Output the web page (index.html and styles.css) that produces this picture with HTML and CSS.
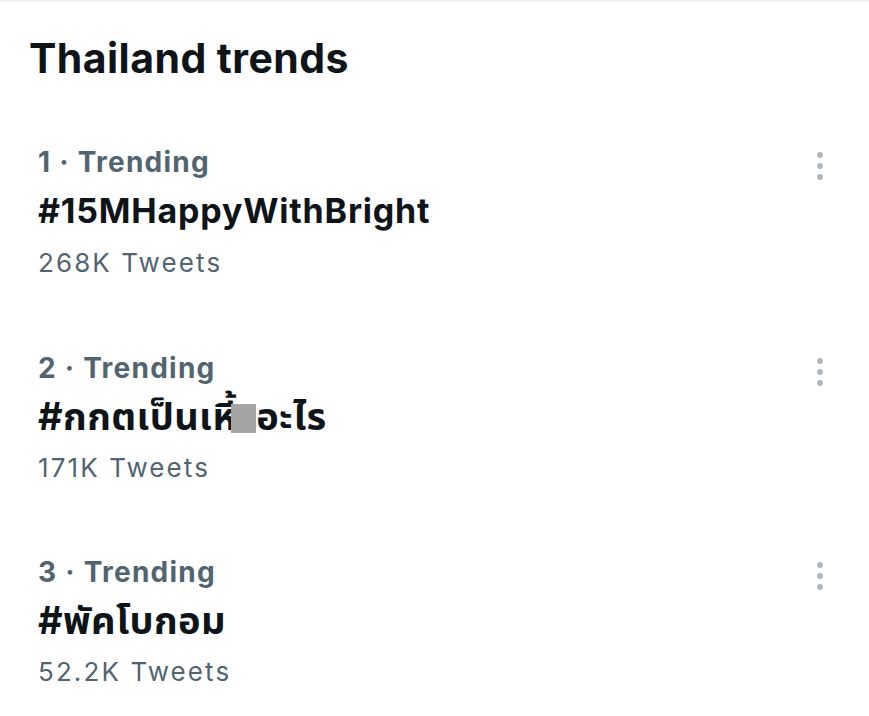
FILE: index.html
```html
<!DOCTYPE html>
<html lang="th">
<head>
<meta charset="utf-8">
<title>Thailand trends</title>
<link rel="stylesheet" href="styles.css">
</head>
<body>
<section class="panel">
  <h2 class="header">Thailand trends</h2>

  <div class="trend">
    <div class="trend-body">
      <div class="meta">1 · Trending</div>
      <div class="name">#15MHappyWithBright</div>
      <div class="count">268K Tweets</div>
    </div>
    <button class="more" aria-label="More">
      <svg width="12" height="34" viewBox="0 0 12 34"><circle cx="6" cy="6" r="2.9"/><circle cx="6" cy="17" r="2.9"/><circle cx="6" cy="28" r="2.9"/></svg>
    </button>
  </div>

  <div class="trend">
    <div class="trend-body">
      <div class="meta">2 · Trending</div>
      <div class="name thai">#กกตเป็นเหี้<span class="censor">ย</span>อะไร</div>
      <div class="count">171K Tweets</div>
    </div>
    <button class="more" aria-label="More">
      <svg width="12" height="34" viewBox="0 0 12 34"><circle cx="6" cy="6" r="2.9"/><circle cx="6" cy="17" r="2.9"/><circle cx="6" cy="28" r="2.9"/></svg>
    </button>
  </div>

  <div class="trend">
    <div class="trend-body">
      <div class="meta">3 · Trending</div>
      <div class="name thai">#พัคโบกอม</div>
      <div class="count">52.2K Tweets</div>
    </div>
    <button class="more" aria-label="More">
      <svg width="12" height="34" viewBox="0 0 12 34"><circle cx="6" cy="6" r="2.9"/><circle cx="6" cy="17" r="2.9"/><circle cx="6" cy="28" r="2.9"/></svg>
    </button>
  </div>
</section>
</body>
</html>
```

FILE: styles.css
```css
* { box-sizing: border-box; }

html, body {
  margin: 0;
  padding: 0;
  background: #ffffff;
}

body {
  font-family: Inter, "Liberation Sans", "Noto Sans Thai", "Noto Sans", sans-serif;
  color: #0f1419;
}

.panel {
  border-top: 2px solid #eff3f4;
  width: 869px;
  min-height: 714px;
}

.header {
  margin: 0;
  padding: 31px 30px 29px 29px;
  font-size: 41px;
  line-height: 50px;
  font-weight: 700;
  color: #0f1419;
  letter-spacing: 0.45px;
}

.trend {
  display: flex;
  align-items: flex-start;
  justify-content: space-between;
  padding: 28px 43px 29.5px 38px;
}

.trend-body {
  display: flex;
  flex-direction: column;
}

.meta {
  font-size: 28px;
  line-height: 44px;
  font-weight: 700;
  color: #536471;
  letter-spacing: 1.25px;
}

.name {
  font-size: 34px;
  line-height: 54px;
  font-weight: 700;
  color: #0f1419;
  letter-spacing: 0.8px;
}

.name.thai {
  font-size: 38px;
  line-height: 53px;
  letter-spacing: 0.4px;
}

.count {
  font-size: 26px;
  line-height: 50px;
  font-weight: 400;
  color: #536471;
  letter-spacing: 2.1px;
}

.censor {
  position: relative;
  color: transparent;
  letter-spacing: -4px;
}

.censor::after {
  content: "";
  position: absolute;
  left: -6px;
  width: 25px;
  top: 11px;
  height: 29px;
  background: #a4a4a4;
}

.more {
  margin: 9px 0 0;
  padding: 0;
  border: 0;
  background: none;
  display: flex;
  line-height: 0;
}

.more svg {
  fill: #aeb6bb;
}
```
